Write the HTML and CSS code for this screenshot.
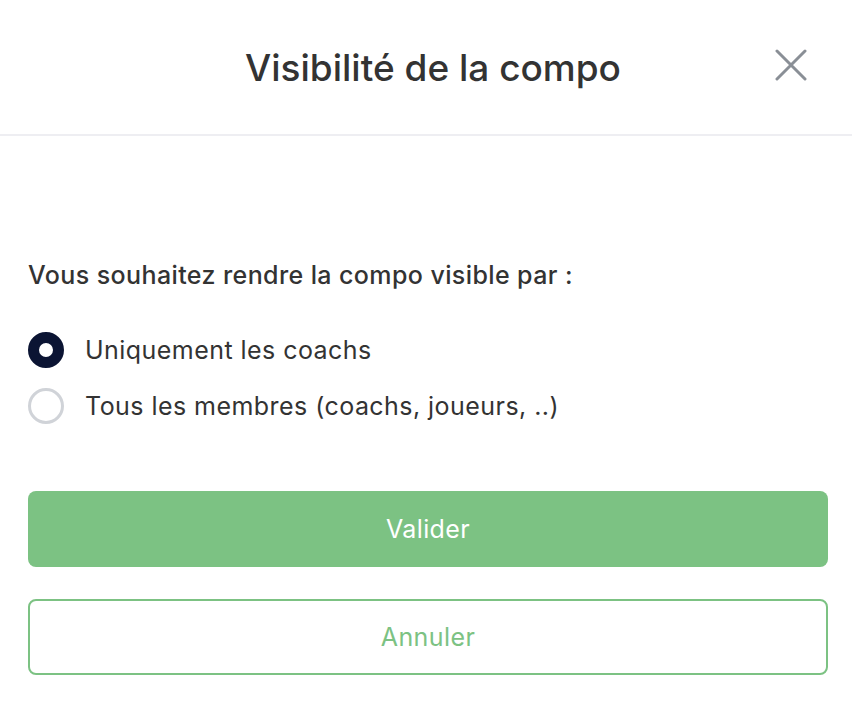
FILE: index.html
```html
<!DOCTYPE html>
<html lang="fr">
<head>
    <meta charset="UTF-8">
    <title>Visibilité de la compo</title>
    <link rel="stylesheet" href="styles.css">
</head>
<body>
    <div class="modal">
        <div class="modal-header">
            <h1 class="modal-title">Visibilité de la compo</h1>
            <button class="close-btn" aria-label="Fermer">
                <svg width="32" height="32" viewBox="0 0 32 32">
                    <path d="M2 2 L30 30 M30 2 L2 30" stroke="#8a8f96" stroke-width="3" stroke-linecap="round"/>
                </svg>
            </button>
        </div>
        <div class="modal-body">
            <p class="question">Vous souhaitez rendre la compo visible par :</p>
            <label class="option">
                <input type="radio" name="visibility" checked>
                <span class="radio"></span>
                <span>Uniquement les coachs</span>
            </label>
            <label class="option">
                <input type="radio" name="visibility">
                <span class="radio"></span>
                <span>Tous les membres (coachs, joueurs, ..)</span>
            </label>
            <div class="actions">
                <button class="btn btn-primary">Valider</button>
                <button class="btn btn-outline">Annuler</button>
            </div>
        </div>
    </div>
</body>
</html>
```

FILE: styles.css
```css
body {
    margin: 0;
    padding: 0;
    background-color: #fff;
    font-family: Inter, "Noto Sans", sans-serif;
    color: #333;
}
.modal-header {
    position: relative;
    display: flex;
    justify-content: center;
    align-items: center;
    height: 134px;
    border-bottom: 2px solid #eeeef2;
}
.modal-title {
    margin: 0;
    font-size: 37px;
    font-weight: 500;
    color: #333;
    padding-left: 14px;
}
.close-btn {
    position: absolute;
    right: 45px;
    top: 49px;
    width: 32px;
    height: 32px;
    padding: 0;
    border: none;
    background: none;
    cursor: pointer;
}
.modal-body {
    padding: 124px 24px 0 28px;
}
.question {
    margin: 0 0 42px;
    font-size: 25px;
    font-weight: 500;
    letter-spacing: 0.4px;
}
.option {
    display: flex;
    align-items: center;
    gap: 21px;
    font-size: 25px;
    letter-spacing: 0.45px;
    height: 36px;
    margin-bottom: 20px;
    cursor: pointer;
}
.option input {
    display: none;
}
.radio {
    box-sizing: border-box;
    width: 36px;
    height: 36px;
    border-radius: 50%;
    border: 3px solid #d0d3d8;
    background: #fff;
}
.option input:checked + .radio {
    border: 11px solid #0b1433;
}
.actions {
    display: flex;
    flex-direction: column;
    gap: 32px;
    margin-top: 67px;
}
.btn {
    height: 76px;
    border-radius: 8px;
    font-family: inherit;
    font-size: 25px;
    letter-spacing: 0.4px;
    cursor: pointer;
}
.btn-primary {
    background-color: #7cc283;
    color: #fff;
    border: none;
}
.btn-outline {
    background-color: #fff;
    color: #7cc283;
    border: 2px solid #7cc283;
}
```
